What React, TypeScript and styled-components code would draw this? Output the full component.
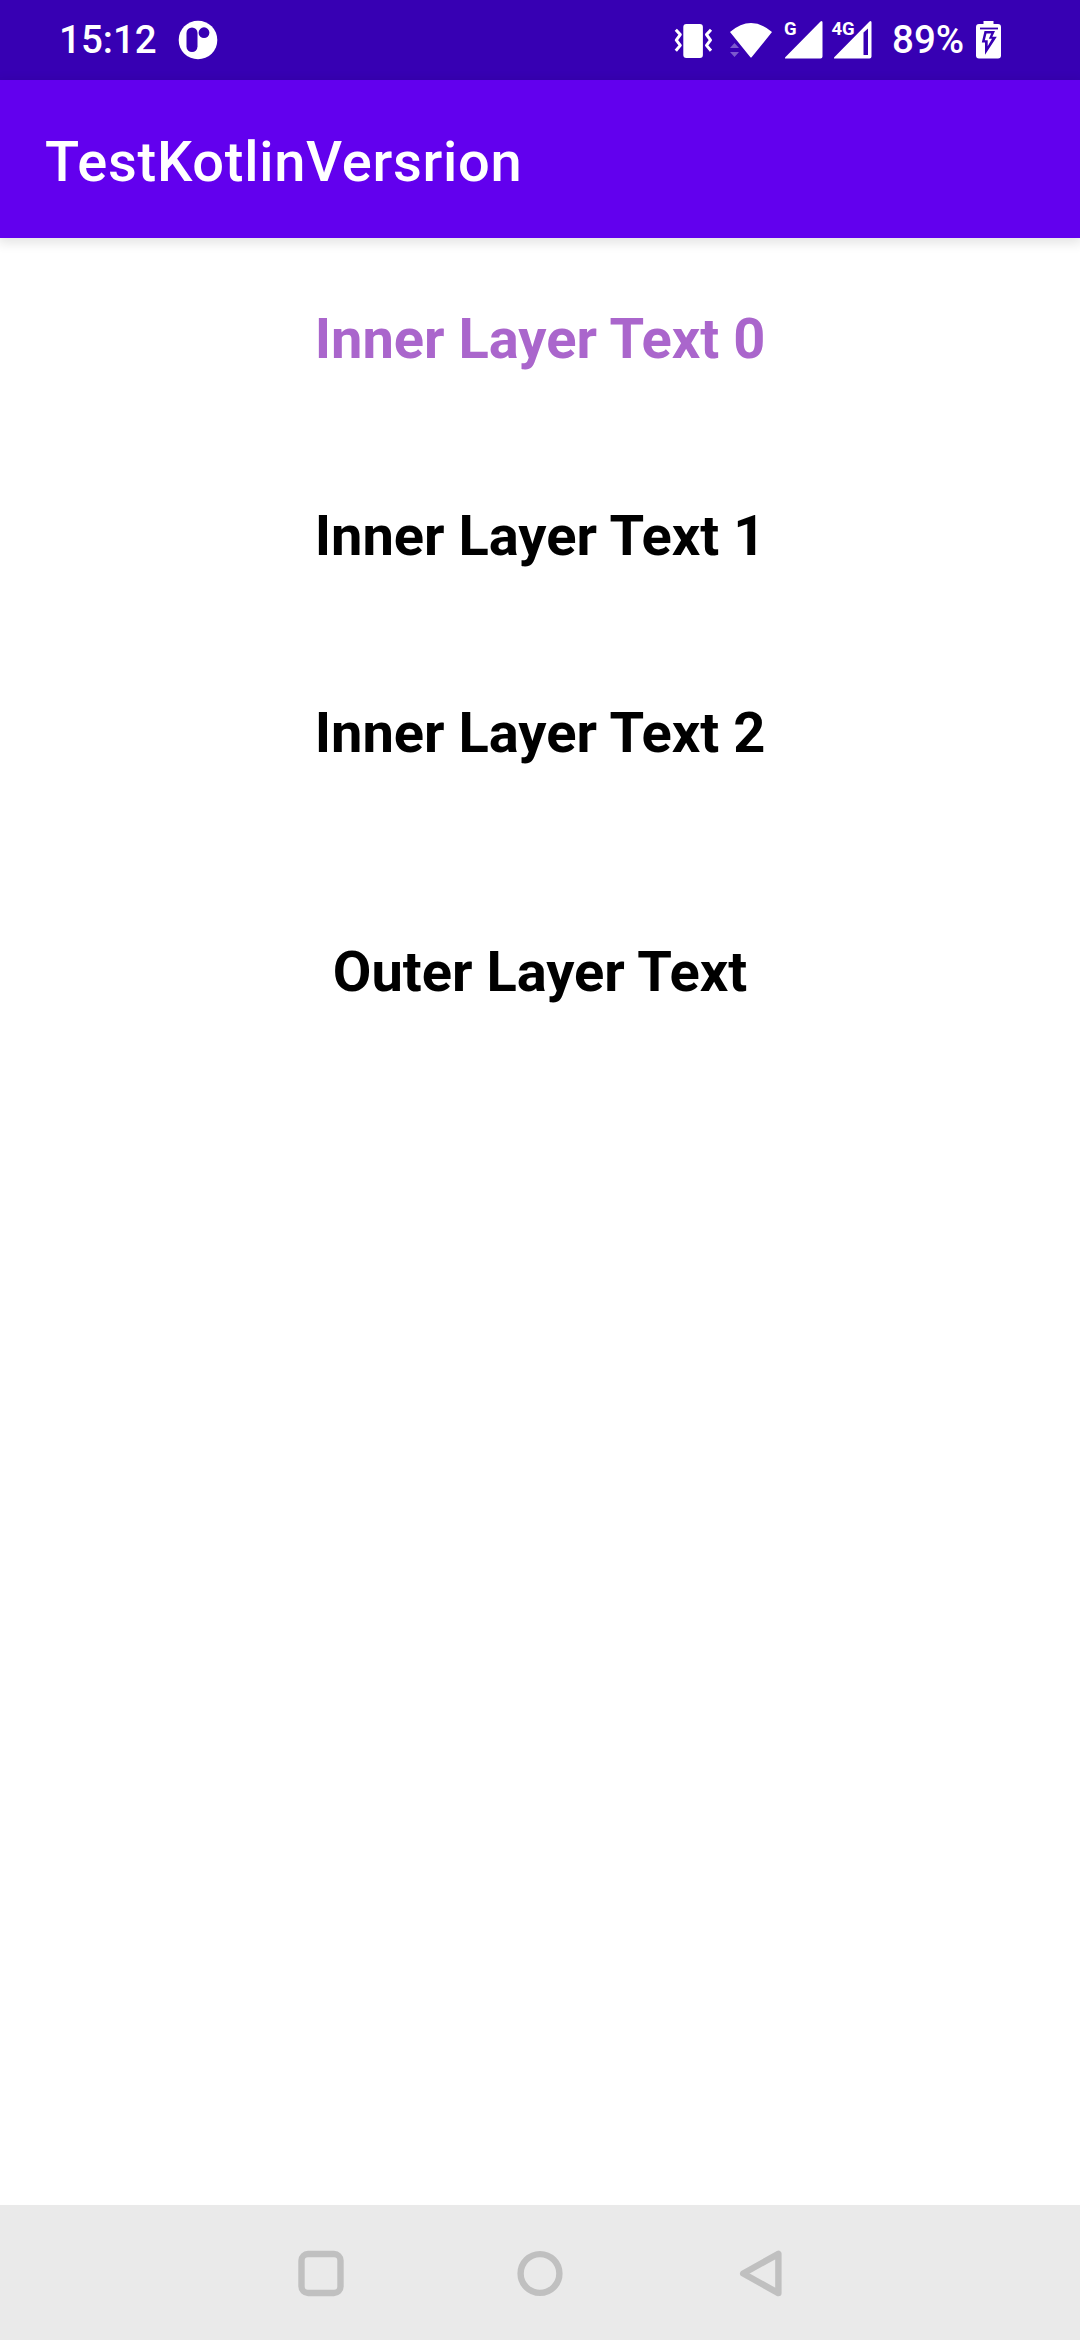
import React from "react";
import styled, { createGlobalStyle } from "styled-components";

const GlobalStyle = createGlobalStyle`
  * { box-sizing: border-box; }
  body { margin: 0; background: #ffffff; font-family: Roboto, "Noto Sans", sans-serif; }
`;

const Screen = styled.div`
  display: flex;
  flex-direction: column;
  width: 1080px;
  height: 2340px;
  background: #ffffff;
  overflow: hidden;
`;

const StatusBar = styled.header`
  display: flex;
  align-items: center;
  flex: none;
  height: 80px;
  padding: 0 78px 0 59px;
  background: #3700b3;
  color: #ffffff;
`;

const StatusText = styled.span<{ $width: number; $gap?: number }>`
  flex: none;
  width: ${(p) => p.$width}px;
  margin-left: ${(p) => p.$gap ?? 0}px;
  font-size: 38.5px;
  font-weight: 500;
  line-height: 80px;
  white-space: nowrap;
`;

const Spacer = styled.div`
  flex: 1;
`;

const Glyph = styled.svg<{ $gap?: number }>`
  display: block;
  flex: none;
  margin-left: ${(p) => p.$gap ?? 0}px;
`;

const SignalLabel = styled.text`
  font-family: Roboto, sans-serif;
  font-size: 18.5px;
  font-weight: 700;
  fill: #ffffff;
`;

const AppBar = styled.div`
  display: flex;
  align-items: center;
  flex: none;
  z-index: 1;
  height: 158px;
  padding: 6px 45px 0;
  background: #6200ee;
  box-shadow: 0 3px 11px 2px rgba(0, 0, 0, 0.11);
`;

const Title = styled.h1`
  margin: 0;
  color: #ffffff;
  font-size: 56px;
  font-weight: 500;
  line-height: 66px;
  letter-spacing: 0.73px;
`;

const Content = styled.main`
  display: flex;
  flex: 1;
  flex-direction: column;
  align-items: center;
  padding-top: 68px;
`;

const InnerLayer = styled.section`
  display: flex;
  flex-direction: column;
  align-items: center;
  gap: 131px;
  margin-bottom: 173px;
`;

const Label = styled.p<{ $color?: string }>`
  margin: 0;
  color: ${(p) => p.$color ?? "#000000"};
  font-size: 56px;
  font-weight: 700;
  line-height: 66px;
  white-space: nowrap;
`;

const NavBar = styled.nav`
  display: flex;
  align-items: center;
  justify-content: center;
  flex: none;
  gap: 171px;
  height: 135px;
  background: #eaeaea;
`;

const NavButton = styled.button`
  display: flex;
  padding: 0;
  border: 0;
  background: none;
`;

const NavIcon = styled.svg`
  display: block;
  fill: none;
  stroke: #c0c0c0;
  stroke-width: 6.4;
  stroke-linejoin: round;
`;

const innerTexts = [
  { text: "Inner Layer Text 0", color: "#aa66cc" },
  { text: "Inner Layer Text 1" },
  { text: "Inner Layer Text 2" },
];

function NotificationIcon() {
  return (
    <Glyph width="40" height="80" viewBox="178 0 40 80">
      <circle cx="198" cy="40" r="19.3" fill="#fff" />
      <rect x="186.5" y="27.5" width="11" height="24.5" rx="5.5" fill="#3700b3" />
      <circle cx="204" cy="32.7" r="5.4" fill="#3700b3" />
    </Glyph>
  );
}

function VibrateIcon() {
  return (
    <Glyph width="40" height="80" viewBox="673 0 40 80">
      <rect x="683.3" y="24" width="19.6" height="34" rx="3" fill="#fff" />
      <path
        d="M675.8 29.8L680.3 34.6L676.3 40.2L680.3 45.4L675.8 50.8M711 29.800L706.500 34.600L710.500 40.200L706.500 45.400L711 50.800"
        fill="none"
        stroke="#fff"
        strokeWidth="3"
        strokeLinejoin="round"
      />
    </Glyph>
  );
}

function WifiIcon() {
  return (
    <Glyph width="44" height="80" viewBox="729 0 44 80" $gap={16}>
      <path d="M730 32Q751 14 772 32L751.8 57Q751 58 750.2 57Z" fill="#fff" />
      <path d="M730 48l4.5-5 4.5 5zM730 52h9l-4.5 5z" fill="#fff" opacity=".35" />
    </Glyph>
  );
}

function SignalIcon() {
  return (
    <Glyph width="40" height="80" viewBox="783 0 40 80" $gap={10}>
      <path
        d="M820.5 21.5Q822.5 20 822.5 22.5V56.5Q822.5 58.5 820.5 58.5H786Q784 58.5 785.5 57Z"
        fill="#fff"
      />
      <SignalLabel x="784" y="35">G</SignalLabel>
    </Glyph>
  );
}

function RoamingSignalIcon() {
  return (
    <Glyph width="42" height="80" viewBox="830 0 42 80" $gap={7}>
      <path
        d="M869.5 21.5Q871.5 20 871.5 22.5V56.5Q871.5 58.5 869.5 58.5H835Q833 58.5 834.5 57ZM863.5 32.5V55H868V28.5Z"
        fill="#fff"
        fillRule="evenodd"
      />
      <SignalLabel x="831.5" y="35">4G</SignalLabel>
    </Glyph>
  );
}

function BatteryIcon() {
  return (
    <Glyph width="26" height="80" viewBox="976 0 26 80">
      <path
        d="M983.5 21H993.5V24H998Q1001 24 1001 27V55.5Q1001 58.5 998 58.5H979Q976 58.5 976 55.5V27Q976 24 979 24H983.5Z"
        fill="#fff"
      />
      <path d="M980 28.5H998" stroke="#3700b3" strokeWidth="1.8" />
      <path d="M984.5 31H995L992.3 36.7H996.8L985 54.8V42.500H981.800Z" fill="#3700b3" />
      <path d="M986.500 33.500H991.200L988.800 38.800H992L987.700 46.300V40.300H984.800Z" fill="#fff" />
    </Glyph>
  );
}

export default function App() {
  return (
    <Screen>
      <GlobalStyle />
      <StatusBar>
        <StatusText $width={119}>15:12</StatusText>
        <NotificationIcon />
        <Spacer />
        <VibrateIcon />
        <WifiIcon />
        <SignalIcon />
        <RoamingSignalIcon />
        <StatusText $width={84} $gap={20}>89%</StatusText>
        <BatteryIcon />
      </StatusBar>
      <AppBar>
        <Title>TestKotlinVersrion</Title>
      </AppBar>
      <Content>
        <InnerLayer>
          {innerTexts.map((item) => (
            <Label key={item.text} $color={item.color}>
              {item.text}
            </Label>
          ))}
        </InnerLayer>
        <Label>Outer Layer Text</Label>
      </Content>
      <NavBar>
        <NavButton aria-label="Recent apps">
          <NavIcon width="48" height="48" viewBox="0 0 48 48">
            <rect x="4.5" y="5" width="39" height="39" rx="6.5" />
          </NavIcon>
        </NavButton>
        <NavButton aria-label="Home">
          <NavIcon width="48" height="48" viewBox="0 0 48 48">
            <circle cx="24" cy="24.5" r="19.4" />
          </NavIcon>
        </NavButton>
        <NavButton aria-label="Back">
          <NavIcon width="48" height="48" viewBox="0 0 48 48">
            <path d="M8.200 24.500L43.400 4.900V44.100Z" />
          </NavIcon>
        </NavButton>
      </NavBar>
    </Screen>
  );
}
